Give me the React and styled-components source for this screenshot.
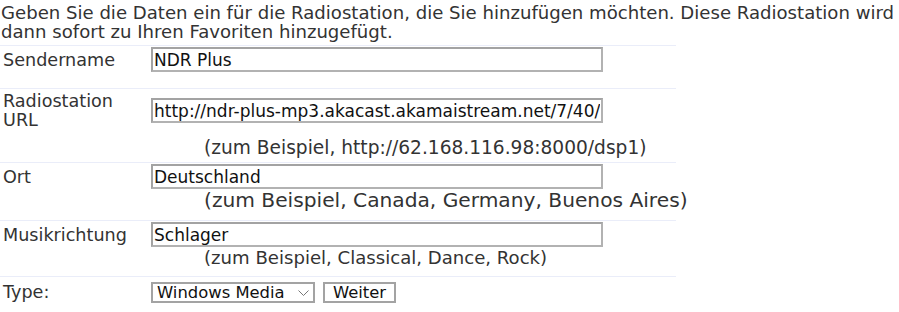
import React from "react";
import styled, { createGlobalStyle } from "styled-components";

const Global = createGlobalStyle`
  html, body {
    margin: 0;
    padding: 0;
    background: #fff;
  }
  body {
    font-family: "DejaVu Sans", Verdana, sans-serif;
    color: #333;
  }
`;

const Page = styled.div`
  width: 899px;
  height: 312px;
  overflow: hidden;
`;

const Intro = styled.p`
  margin: 0;
  padding: 3px 0 0 1px;
  font-size: 18.1px;
  line-height: 19px;
  white-space: nowrap;
`;

const Form = styled.div`
  width: 676px;
  margin-top: 4px;
`;

const Row = styled.div`
  display: flex;
  align-items: ${(p) => (p.$top ? "flex-start" : "baseline")};
  border-top: 1px solid #eaedf9;
  height: ${(p) => p.$h}px;
  box-sizing: border-box;
`;

const Label = styled.div`
  width: 151px;
  flex: none;
  padding: ${(p) => p.$top || 0}px 0 0 3px;
  font-size: 17.6px;
  line-height: 19px;
  box-sizing: border-box;
`;

const Field = styled.div`
  display: flex;
  flex-direction: column;
  padding-top: ${(p) => p.$top}px;
`;

const Input = styled.input`
  width: 452px;
  height: 25px;
  box-sizing: border-box;
  border: 2px solid #a3a3a3;
  border-right-color: #b2b2b2;
  border-bottom-color: #b2b2b2;
  padding: 0 1px;
  font-family: "DejaVu Sans", Verdana, sans-serif;
  font-size: 17px;
  color: #111;
  background: #fff;
  outline: none;
`;

const Hint = styled.div`
  padding-left: 53px;
  margin-top: ${(p) => p.$mt}px;
  font-size: ${(p) => p.$size}px;
  line-height: ${(p) => p.$lh}px;
  white-space: nowrap;
`;

const Controls = styled.div`
  display: flex;
  align-items: center;
  gap: 8px;
`;

const SelectWrap = styled.div`
  position: relative;
  width: 164px;
  height: 21px;
`;

const Select = styled.select`
  appearance: none;
  width: 100%;
  height: 100%;
  box-sizing: border-box;
  border: 2px solid #a3a3a3;
  border-radius: 0;
  background: #fff;
  padding: 0 20px 0 4px;
  font-family: "DejaVu Sans", Verdana, sans-serif;
  font-size: 16.4px;
  line-height: 17px;
  color: #111;
  outline: none;
`;

const Chevron = styled.svg`
  position: absolute;
  right: 6px;
  top: 8px;
  pointer-events: none;
`;

const Button = styled.button`
  height: 21px;
  width: 73px;
  box-sizing: border-box;
  border: 2px solid #a3a3a3;
  background: #fff;
  padding: 0;
  font-family: "DejaVu Sans", Verdana, sans-serif;
  font-size: 16.4px;
  line-height: 17px;
  color: #111;
`;

export default function App() {
  return (
    <Page>
      <Global />
      <Intro>
        Geben Sie die Daten ein für die Radiostation, die Sie hinzufügen möchten. Diese Radiostation wird
        <br />
        dann sofort zu Ihren Favoriten hinzugefügt.
      </Intro>
      <Form>
        <Row $h={43}>
          <Label>Sendername</Label>
          <Field $top={1}>
            <Input defaultValue="NDR Plus" />
          </Field>
        </Row>
        <Row $h={74} $top>
          <Label $top={3}>
            Radiostation
            <br />
            URL
          </Label>
          <Field $top={9}>
            <Input defaultValue="http://ndr-plus-mp3.akacast.akamaistream.net/7/40/" />
            <Hint $mt={14} $size={18.6} $lh={22}>
              (zum Beispiel, http://62.168.116.98:8000/dsp1)
            </Hint>
          </Field>
        </Row>
        <Row $h={58}>
          <Label>Ort</Label>
          <Field $top={1}>
            <Input defaultValue="Deutschland" />
            <Hint $mt={0} $size={20.2} $lh={23}>
              (zum Beispiel, Canada, Germany, Buenos Aires)
            </Hint>
          </Field>
        </Row>
        <Row $h={56}>
          <Label>Musikrichtung</Label>
          <Field $top={1}>
            <Input defaultValue="Schlager" />
            <Hint $mt={0} $size={18.1} $lh={22}>
              (zum Beispiel, Classical, Dance, Rock)
            </Hint>
          </Field>
        </Row>
        <Row $h={36}>
          <Label>Type:</Label>
          <Field $top={5}>
            <Controls>
              <SelectWrap>
                <Select defaultValue="wm">
                  <option value="wm">Windows Media</option>
                  <option value="real">Real Audio</option>
                  <option value="mp3">MP3</option>
                </Select>
                <Chevron width="11" height="6" viewBox="0 0 11 6">
                  <path d="M0.5 0.5 L5.5 5.5 L10.5 0.5" fill="none" stroke="#777" strokeWidth="1" />
                </Chevron>
              </SelectWrap>
              <Button>Weiter</Button>
            </Controls>
          </Field>
        </Row>
      </Form>
    </Page>
  );
}
